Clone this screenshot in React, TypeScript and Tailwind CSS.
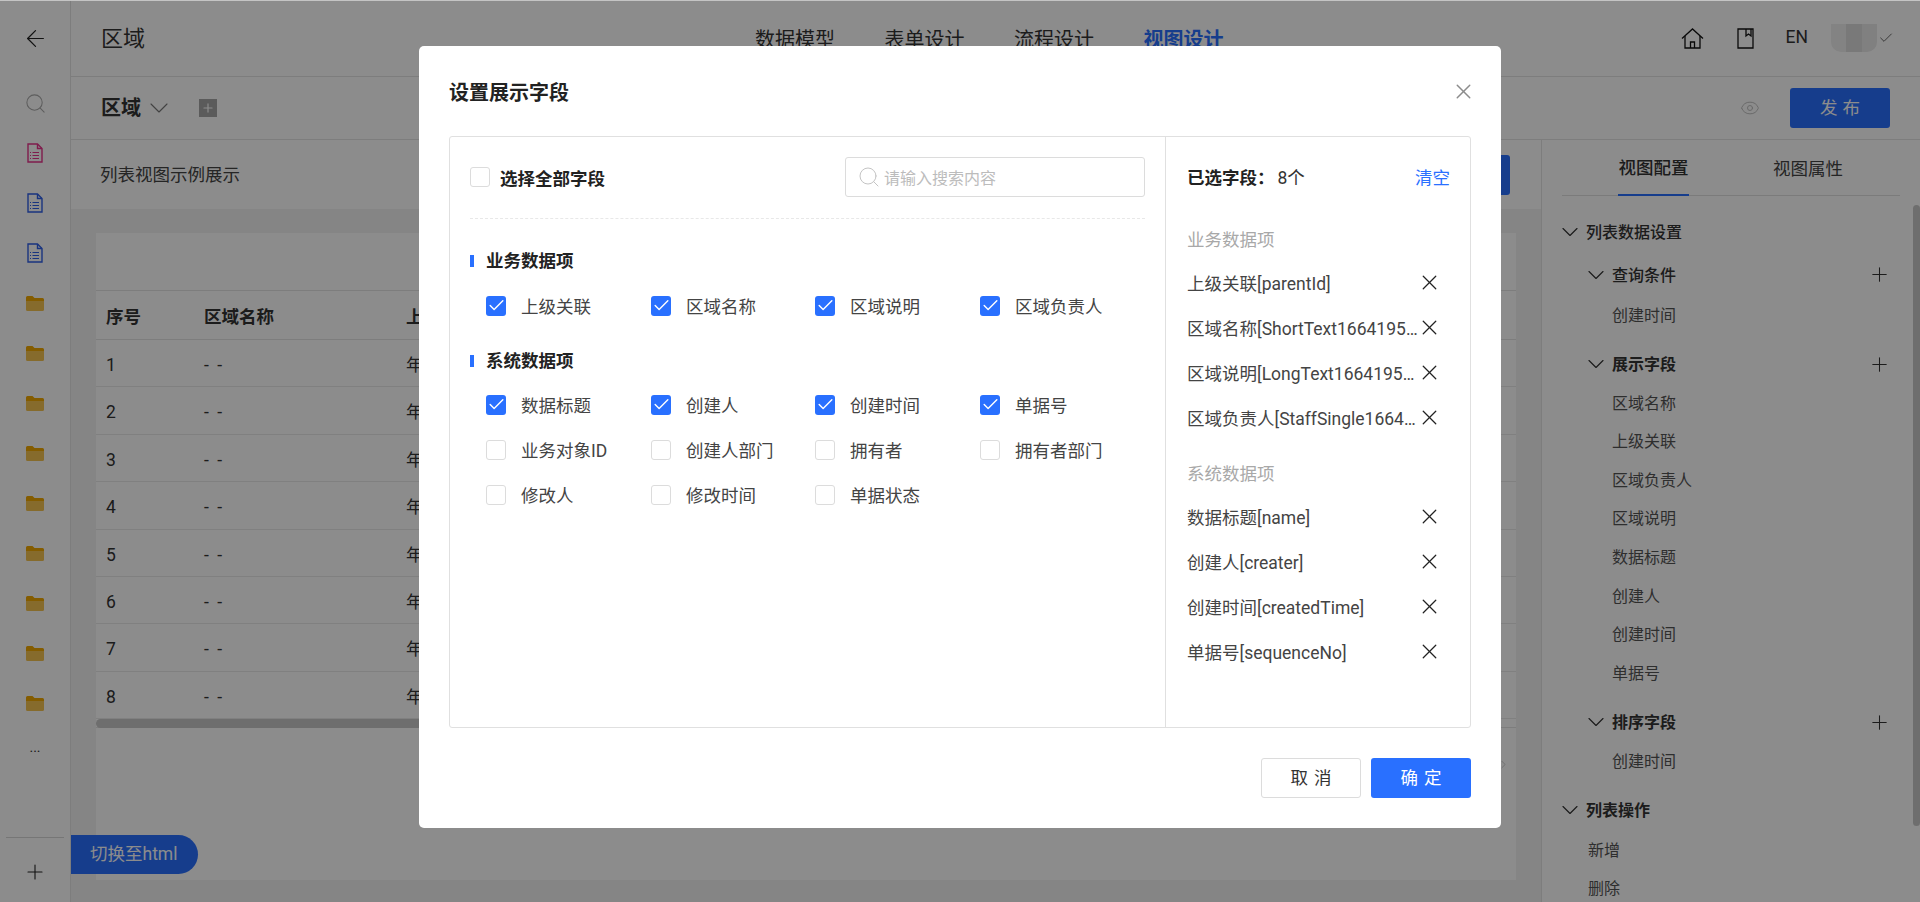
import React from "react";
import { ArrowLeft, Check, ChevronDown, ChevronRight, Eye, Plus, Search, X } from "lucide-react";

const rows = [1, 2, 3, 4, 5, 6, 7, 8];
const folders = [1, 2, 3, 4, 5, 6, 7, 8, 9];

function DocIcon({ color }: { color: string }) {
  return (
    <svg width="16" height="20" viewBox="0 0 16 20" fill="none" stroke={color} strokeWidth="1.4">
      <path d="M1 1h9.5L15 5.5V19H1z" />
      <path d="M10.5 1v4.5H15" />
      <path d="M5.5 9.5H12M5.5 12.5H12M5.5 15.5H12" strokeWidth="1.1" />
      <path d="M3 9.5h1M3 12.5h1M3 15.5h1" strokeWidth="1.1" />
    </svg>
  );
}

function FolderIcon() {
  return (
    <svg width="18" height="15" viewBox="0 0 18 15">
      <path d="M0 1.5A1.5 1.5 0 0 1 1.500 0h5l2 2h8A1.500 1.500 0 0 1 18 3.500V6H0z" fill="#f0a800" />
      <path d="M0 5h18v8.500a1.500 1.500 0 0 1-1.500 1.500h-15A1.500 1.500 0 0 1 0 13.500z" fill="#f5c451" />
    </svg>
  );
}

function Sidebar() {
  return (
    <div className="flex w-[71px] shrink-0 flex-col border-r border-[#e4e4e4]">
      <div className="flex h-[76px] items-center justify-center">
        <ArrowLeft size={27} strokeWidth={1.1} className="text-[#222]" />
      </div>
      <div className="mt-[2px] flex flex-col">
        <div className="flex h-[50px] items-center justify-center">
          <Search size={23} strokeWidth={1.1} className="text-[#aaa]" />
        </div>
        <div className="flex h-[50px] items-center justify-center">
          <DocIcon color="#e8348c" />
        </div>
        <div className="flex h-[50px] items-center justify-center">
          <DocIcon color="#2f5fe8" />
        </div>
        <div className="flex h-[50px] items-center justify-center">
          <DocIcon color="#2f5fe8" />
        </div>
        {folders.map((r) => (
          <div key={r} className="flex h-[50px] items-center justify-center">
            <FolderIcon />
          </div>
        ))}
        <div className="flex h-[38px] items-center justify-center text-[14px] leading-none text-[#333]">...</div>
      </div>
      <div className="mt-auto">
        <div className="mx-[6px] border-t border-[#d8d8d8]" />
        <div className="flex h-[64px] items-center justify-center pt-[4px]">
          <Plus size={24} strokeWidth={1.1} className="text-[#222]" />
        </div>
      </div>
    </div>
  );
}

function TopBar() {
  return (
    <div className="flex h-[77px] items-center border-b border-[#e4e4e4] pl-[30px] text-[#333]">
      <span className="pt-[2px] text-[22px] leading-none">区域</span>
      <div className="ml-[610px] flex gap-[49.500px] pt-[3px] text-[20px] leading-none">
        <span>数据模型</span>
        <span>表单设计</span>
        <span>流程设计</span>
        <span className="font-bold text-[#2970ff]">视图设计</span>
      </div>
      <div className="ml-auto flex items-center pr-[26.500px]">
        <svg width="23" height="21" viewBox="0 0 23 21" fill="none" stroke="#111" strokeWidth="1.3">
          <path d="M1 10.500 11.500 1 22 10.500" />
          <path d="M4 8v12h15V8" />
          <path d="M9.500 20v-6h4v6" />
        </svg>
        <svg width="17" height="21" viewBox="0 0 17 21" fill="none" stroke="#111" strokeWidth="1.3" className="ml-[33px]">
          <path d="M1 1h15v19H1z" />
          <path d="M9 1v7l2.500-2 2.500 2V1" />
        </svg>
        <span className="ml-[32px] text-[17.5px] leading-none">EN</span>
        <div className="ml-[23px] flex h-[28px] w-[46px] overflow-hidden rounded-b-[10px]">
          <div className="flex-1 bg-[#efefef]" />
          <div className="flex-1 bg-[#dcdcdc]" />
          <div className="flex-1 bg-[#e9e9e9]" />
        </div>
        <Check size={16} strokeWidth={1.1} className="ml-[0.500px] text-[#333]" />
      </div>
    </div>
  );
}

function TableCard() {
  return (
    <div className="flex h-full flex-col bg-white text-[17.5px] text-[#333]">
      <div className="h-[58px] shrink-0 border-b border-[#e4e4e4]" />
      <div className="grid h-[49px] shrink-0 grid-cols-[98px_202px_1fr] items-center border-b border-[#e4e4e4] pt-[4px] pl-[10px] font-bold">
        <span>序号</span>
        <span>区域名称</span>
        <span>上级关联</span>
      </div>
      {rows.map((r) => (
        <div key={r} className="grid h-[47.400px] shrink-0 grid-cols-[98px_202px_1fr] items-center border-b border-[#eaeaea] pt-[4px] pl-[10px]">
          <span>{r}</span>
          <span className="tracking-[2px]">- -</span>
          <span>年</span>
        </div>
      ))}
      <div className="h-[9px] shrink-0 border-b border-[#e4e4e4]">
        <div className="h-[9px] w-[1300px] rounded-full bg-[#c8c8c8]" />
      </div>
      <div className="flex justify-end pt-[30px] pr-[6px]">
        <ChevronRight size={13} strokeWidth={1.3} className="text-[#bbb]" />
      </div>
    </div>
  );
}

function TreeHeader({ label, bold, indent, add }: { label: string; bold?: boolean; indent?: boolean; add?: boolean }) {
  return (
    <div className={`flex h-[38.600px] items-center text-[16px] text-[#333] ${indent ? "pl-[26px]" : ""} ${bold ? "font-bold" : "font-medium"}`}>
      <ChevronDown size={28} strokeWidth={1} className="shrink-0" />
      <span className="ml-[2px] pt-[2px]">{label}</span>
      {add && <Plus size={23} strokeWidth={1.1} className="mr-[23px] ml-auto" />}
    </div>
  );
}

function TreeItem({ label, shallow }: { label: string; shallow?: boolean }) {
  return (
    <div className={`flex h-[38.600px] items-center text-[16px] text-[#555] ${shallow ? "pt-[5px] pl-[32px]" : "pt-[2px] pl-[56px]"}`}>{label}</div>
  );
}

function ConfigPanel() {
  return (
    <div className="relative w-[379px] shrink-0 overflow-hidden border-l border-[#e4e4e4] bg-white">
      <div className="mx-[20px] flex h-[56px] border-b border-[#e0e0e0] pl-[56px] text-[17.5px]">
        <div className="flex h-[56px] w-[71px] items-center justify-center border-b-2 border-[#2970ff] pt-[3px] font-medium whitespace-nowrap text-[#333]">视图配置</div>
        <div className="ml-[84px] flex h-[56px] items-center pt-[3px] whitespace-nowrap text-[#444]">视图属性</div>
      </div>
      <div className="mt-[17px] pr-[6px] pl-[14px]">
        <TreeHeader label="列表数据设置" />
        <div className="mt-[4px]">
          <TreeHeader label="查询条件" indent add />
          <div className="pt-[2px]">
            <TreeItem label="创建时间" />
          </div>
        </div>
        <div className="mt-[10px]">
          <TreeHeader label="展示字段" indent bold add />
          {["区域名称", "上级关联", "区域负责人", "区域说明", "数据标题", "创建人", "创建时间", "单据号"].map((s) => (
            <TreeItem key={s} label={s} />
          ))}
        </div>
        <div className="mt-[11px]">
          <TreeHeader label="排序字段" indent bold add />
          <TreeItem label="创建时间" />
        </div>
        <div className="mt-[10px]">
          <TreeHeader label="列表操作" bold />
          <TreeItem label="新增" shallow />
          <TreeItem label="删除" shallow />
        </div>
      </div>
      <div className="absolute top-[65px] right-0 h-[621px] w-[7px] rounded-full bg-[#c9c9c9]" />
    </div>
  );
}

function Box({ checked }: { checked?: boolean }) {
  return checked ? (
    <span className="flex h-[20px] w-[20px] shrink-0 items-center justify-center rounded-[3px] bg-[#2970ff]">
      <Check size={19} strokeWidth={1.8} className="text-white" />
    </span>
  ) : (
    <span className="h-[20px] w-[20px] shrink-0 rounded-[3px] border border-[#dcdcdc] bg-white" />
  );
}

function Field({ label, checked }: { label: string; checked?: boolean }) {
  return (
    <div className="flex h-[45px] items-center gap-[15px] text-[17.5px] text-[#444]">
      <Box checked={checked} />
      <span className="pt-[4px] whitespace-nowrap">{label}</span>
    </div>
  );
}

function SectionTitle({ label }: { label: string }) {
  return (
    <div className="flex h-[24px] items-center gap-[12px] text-[17.5px] font-bold text-[#222]">
      <span className="h-[12px] w-[4px] bg-[#2970ff]" />
      {label}
    </div>
  );
}

function Selected({ label }: { label: string }) {
  return (
    <div className="flex h-[45px] items-center text-[17.5px] text-[#444]">
      <span className="w-[232px] shrink-0 truncate">{label}</span>
      <X size={25} strokeWidth={1.2} className="mb-[5px] ml-[-2.500px] shrink-0 text-[#222]" />
    </div>
  );
}

function FieldDialog() {
  return (
    <div className="absolute top-[46px] left-[419px] flex h-[782px] w-[1082px] flex-col rounded-[5px] bg-white pr-[30px] pl-[30px]">
      <div className="flex h-[90px] shrink-0 items-center justify-between">
        <span className="pt-[3px] text-[20px] leading-none font-bold text-[#222]">设置展示字段</span>
        <X size={25} strokeWidth={1.4} className="mr-[-4.500px] text-[#8c8c8c]" />
      </div>
      <div className="flex h-[592px] shrink-0 rounded-[3px] border border-[#e0e0e0]">
        <div className="w-[716px] shrink-0 border-r border-[#e0e0e0] px-[20px]">
          <div className="flex items-center justify-between border-b border-dashed border-[#e8e8e8] pt-[20px] pb-[21px]">
            <label className="flex items-center gap-[10px] text-[17.5px] font-bold text-[#222]">
              <Box />
              <span className="pt-[4px]">选择全部字段</span>
            </label>
            <div className="flex h-[40px] w-[300px] items-center gap-[3px] rounded-[3px] border border-[#dcdcdc] pl-[11px] text-[16px] text-[#bcbcbc]">
              <Search size={24} strokeWidth={1} className="text-[#c4c4c4]" />
              <span className="pt-[4px]">请输入搜索内容</span>
            </div>
          </div>
          <div className="mt-[30px]">
            <SectionTitle label="业务数据项" />
            <div className="mt-[10px] grid grid-cols-[165px_164px_165px_165px] pl-[16px]">
              <Field label="上级关联" checked />
              <Field label="区域名称" checked />
              <Field label="区域说明" checked />
              <Field label="区域负责人" checked />
            </div>
          </div>
          <div className="mt-[21px]">
            <SectionTitle label="系统数据项" />
            <div className="mt-[9px] grid grid-cols-[165px_164px_165px_165px] pl-[16px]">
              <Field label="数据标题" checked />
              <Field label="创建人" checked />
              <Field label="创建时间" checked />
              <Field label="单据号" checked />
              <Field label="业务对象ID" />
              <Field label="创建人部门" />
              <Field label="拥有者" />
              <Field label="拥有者部门" />
              <Field label="修改人" />
              <Field label="修改时间" />
              <Field label="单据状态" />
            </div>
          </div>
        </div>
        <div className="flex-1 pr-[20px] pl-[21px]">
          <div className="mt-[21px] flex h-[40px] items-center text-[17.5px]">
            <span className="font-bold text-[#222]">已选字段：</span>
            <span className="ml-[3px] text-[#333]">8个</span>
            <span className="ml-auto text-[#2970ff]">清空</span>
          </div>
          <div className="mt-[19px] flex h-[45px] items-center pt-[2px] text-[17.5px] text-[#a8a8a8]">业务数据项</div>
          <Selected label="上级关联[parentId]" />
          <Selected label="区域名称[ShortText1664195322001]" />
          <Selected label="区域说明[LongText1664195322002]" />
          <Selected label="区域负责人[StaffSingle1664195322003]" />
          <div className="mt-[9px] flex h-[45px] items-center pt-[2px] text-[17.5px] text-[#a8a8a8]">系统数据项</div>
          <Selected label="数据标题[name]" />
          <Selected label="创建人[creater]" />
          <Selected label="创建时间[createdTime]" />
          <Selected label="单据号[sequenceNo]" />
        </div>
      </div>
      <div className="mt-[30px] flex justify-end gap-[10px] text-[17.5px]">
        <button type="button" className="h-[40px] w-[100px] rounded-[3px] border border-[#dcdcdc] bg-white pl-[6px] tracking-[6px] text-[#333]">
          取消
        </button>
        <button type="button" className="h-[40px] w-[100px] rounded-[3px] bg-[#2970ff] pl-[6px] tracking-[6px] text-white">
          确定
        </button>
      </div>
    </div>
  );
}

export default function App() {
  return (
    <div className="relative h-[902px] w-full overflow-hidden bg-white [font-family:'Roboto','Noto_Sans_CJK_SC',sans-serif]">
      <div className="flex h-full">
        <Sidebar />
        <div className="flex min-w-0 flex-1 flex-col">
          <TopBar />
          <div className="flex h-[63px] shrink-0 items-center border-b border-[#e4e4e4] pl-[30px] text-[#333]">
            <span className="text-[20px] leading-none font-bold">区域</span>
            <ChevronDown size={32} strokeWidth={0.8} className="ml-[2px] text-[#777]" />
            <span className="ml-[24px] flex h-[18px] w-[18px] items-center justify-center bg-[#a6a6a6]">
              <Plus size={14} strokeWidth={2} className="text-white" />
            </span>
            <Eye size={20} strokeWidth={1.1} className="ml-auto text-[#bbb]" />
            <button type="button" className="mr-[30px] ml-[30px] h-[40px] w-[100px] rounded-[3px] bg-[#2970ff] pl-[5px] text-[17.5px] tracking-[5px] text-white">
              发布
            </button>
          </div>
          <div className="flex min-h-0 flex-1">
            <div className="flex min-w-0 flex-1 flex-col">
              <div className="flex h-[69px] shrink-0 items-center justify-between pr-[31px] pl-[29px] text-[17.5px] text-[#444]">
                <span className="pt-[2px]">列表视图示例展示</span>
                <span className="h-[40px] w-[100px] rounded-[3px] bg-[#2970ff]" />
              </div>
              <div className="min-h-0 flex-1 bg-[#f2f2f2] px-[25px] pt-[24px] pb-[22px]">
                <TableCard />
              </div>
            </div>
            <ConfigPanel />
          </div>
        </div>
      </div>
      <div className="absolute top-[835px] left-[71px] flex h-[39px] w-[127px] items-center rounded-r-full bg-[#2970ff] pl-[19px] text-[17.5px] text-white">
        切换至html
      </div>
      <div className="absolute inset-x-0 top-0 h-px bg-[#c4c4c4]" />
      <div className="absolute inset-x-0 top-px bottom-0 bg-black/45" />
      <FieldDialog />
    </div>
  );
}
